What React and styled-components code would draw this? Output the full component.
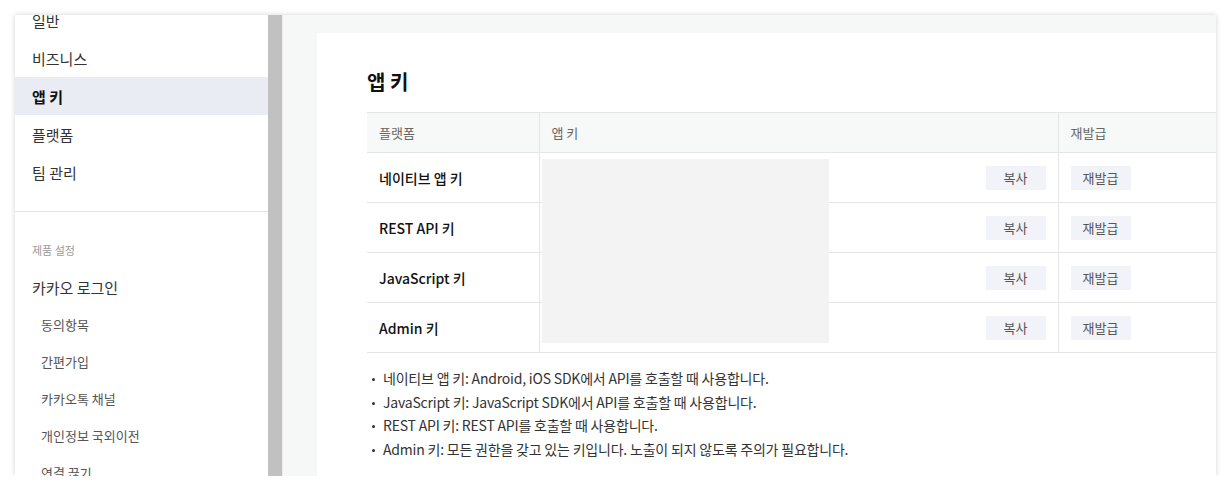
import styled, { createGlobalStyle } from "styled-components"

const GlobalStyle = createGlobalStyle`
    html, body {
        margin: 0;
        padding: 0;
        background: #ffffff;
    }
    body {
        font-family: "Noto Sans CJK KR", "Noto Sans", sans-serif;
        color: #333;
    }
    * {
        box-sizing: border-box;
    }
`

const mainMenu = ["일반", "비즈니스", "앱 키", "플랫폼", "팀 관리"]
const loginMenu = ["동의항목", "간편가입", "카카오톡 채널", "개인정보 국외이전", "연결 끊기"]
const keys = ["네이티브 앱 키", "REST API 키", "JavaScript 키", "Admin 키"]
const notes = [
    "네이티브 앱 키: Android, iOS SDK에서 API를 호출할 때 사용합니다.",
    "JavaScript 키: JavaScript SDK에서 API를 호출할 때 사용합니다.",
    "REST API 키: REST API를 호출할 때 사용합니다.",
    "Admin 키: 모든 권한을 갖고 있는 키입니다. 노출이 되지 않도록 주의가 필요합니다.",
]

const App = () => {
    return (
        <>
            <GlobalStyle />
            <Frame>
                <Sidebar>
                    <MenuList>
                        {mainMenu.map(item => (
                            <MenuItem key={item} $active={item === "앱 키"}>{item}</MenuItem>
                        ))}
                    </MenuList>
                    <Section>
                        <SectionLabel>제품 설정</SectionLabel>
                        <MenuItem>카카오 로그인</MenuItem>
                        {loginMenu.map(item => (
                            <SubItem key={item}>{item}</SubItem>
                        ))}
                    </Section>
                </Sidebar>
                <Scrollbar />
                <Main>
                    <Card>
                        <Title>앱 키</Title>
                        <TableWrap>
                            <Table>
                                <thead>
                                    <tr>
                                        <Th $w={172}>플랫폼</Th>
                                        <Th $w={519}>앱 키</Th>
                                        <Th>재발급</Th>
                                    </tr>
                                </thead>
                                <tbody>
                                    {keys.map(name => (
                                        <tr key={name}>
                                            <Label>{name}</Label>
                                            <KeyCell>
                                                <SmallButton>복사</SmallButton>
                                            </KeyCell>
                                            <Td>
                                                <SmallButton>재발급</SmallButton>
                                            </Td>
                                        </tr>
                                    ))}
                                </tbody>
                            </Table>
                            {/* masked key values */}
                            <Mask />
                        </TableWrap>
                        <Notes>
                            {notes.map(note => (
                                <li key={note}>{note}</li>
                            ))}
                        </Notes>
                    </Card>
                </Main>
            </Frame>
        </>
    )
}

const Frame = styled.div`
    margin: 15px 0 0 15px;
    width: 1201px;
    height: 461px;
    display: flex;
    overflow: hidden;
    background: #fff;
    box-shadow: 0 0 5px rgba(0, 0, 0, .18);
`

const Sidebar = styled.nav`
    width: 253px;
    flex-shrink: 0;
    background: #fff;
    overflow: hidden;
`

const MenuList = styled.div`
    margin-top: -14px;
    padding-bottom: 20px;
    border-bottom: 1px solid #e5e5e5;
`

const MenuItem = styled.div`
    height: 38px;
    display: flex;
    align-items: center;
    padding-left: 17px;
    font-size: 15px;
    color: ${p => p.$active ? "#111" : "#333"};
    font-weight: ${p => p.$active ? 700 : 400};
    background: ${p => p.$active ? "#e9ecf3" : "transparent"};
`

const Section = styled.div`
    padding-top: 29px;
`

const SectionLabel = styled.div`
    padding-left: 17px;
    font-size: 11px;
    line-height: 18px;
    color: #999;
    margin-bottom: 9px;
`

const SubItem = styled.div`
    height: 37px;
    display: flex;
    align-items: center;
    padding-left: 26px;
    font-size: 13px;
    color: #555;
`

const Scrollbar = styled.div`
    width: 15px;
    flex-shrink: 0;
    background: #c1c1c1;
    border-right: 1px solid #ececec;
`

const Main = styled.main`
    flex: 1;
    background: #f6f7f7;
    padding: 18px 0 0 34px;
    overflow: hidden;
`

const Card = styled.section`
    width: 1000px;
    min-height: 500px;
    background: #fff;
    padding: 34px 0 0 50px;
`

const Title = styled.h2`
    margin: 0 0 15px;
    font-size: 20px;
    line-height: 30px;
    font-weight: 700;
    color: #111;
`

const TableWrap = styled.div`
    position: relative;
    width: 900px;
`

const Table = styled.table`
    width: 100%;
    border-collapse: collapse;
    table-layout: fixed;
    border-top: 1px solid #e5e5e5;
    border-bottom: 1px solid #e5e5e5;
    thead tr {
        background: #f7f8f8;
    }
    tbody tr {
        border-top: 1px solid #e5e5e5;
    }
`

const Th = styled.th`
    width: ${p => p.$w ? `${p.$w}px` : "auto"};
    height: 40px;
    padding: 0 12px;
    text-align: left;
    font-size: 13px;
    font-weight: 400;
    color: #666;
    & + & {
        border-left: 1px solid #e5e5e5;
    }
`

const Td = styled.td`
    height: 50px;
    padding: 0 12px;
    border-left: 1px solid #e5e5e5;
    font-size: 14px;
`

const Label = styled(Td)`
    border-left: none;
    color: #111;
    font-weight: 500;
`

const KeyCell = styled(Td)`
    text-align: right;
`

const SmallButton = styled.button`
    width: 60px;
    height: 24px;
    border: none;
    background: #f2f3f8;
    font-family: inherit;
    font-size: 13px;
    color: #555;
    padding: 0;
    vertical-align: middle;
`

const Mask = styled.div`
    position: absolute;
    left: 175px;
    top: 47px;
    width: 287px;
    height: 184px;
    background: #f3f3f3;
`

const Notes = styled.ul`
    margin: 14px 0 0;
    padding: 0 0 0 16px;
    list-style: none;
    li {
        position: relative;
        font-size: 14px;
        line-height: 23.7px;
        letter-spacing: -0.2px;
        color: #333;
    }
    li::before {
        content: "";
        position: absolute;
        left: -11px;
        top: 11px;
        width: 3px;
        height: 3px;
        border-radius: 50%;
        background: #333;
    }
`

export default App
